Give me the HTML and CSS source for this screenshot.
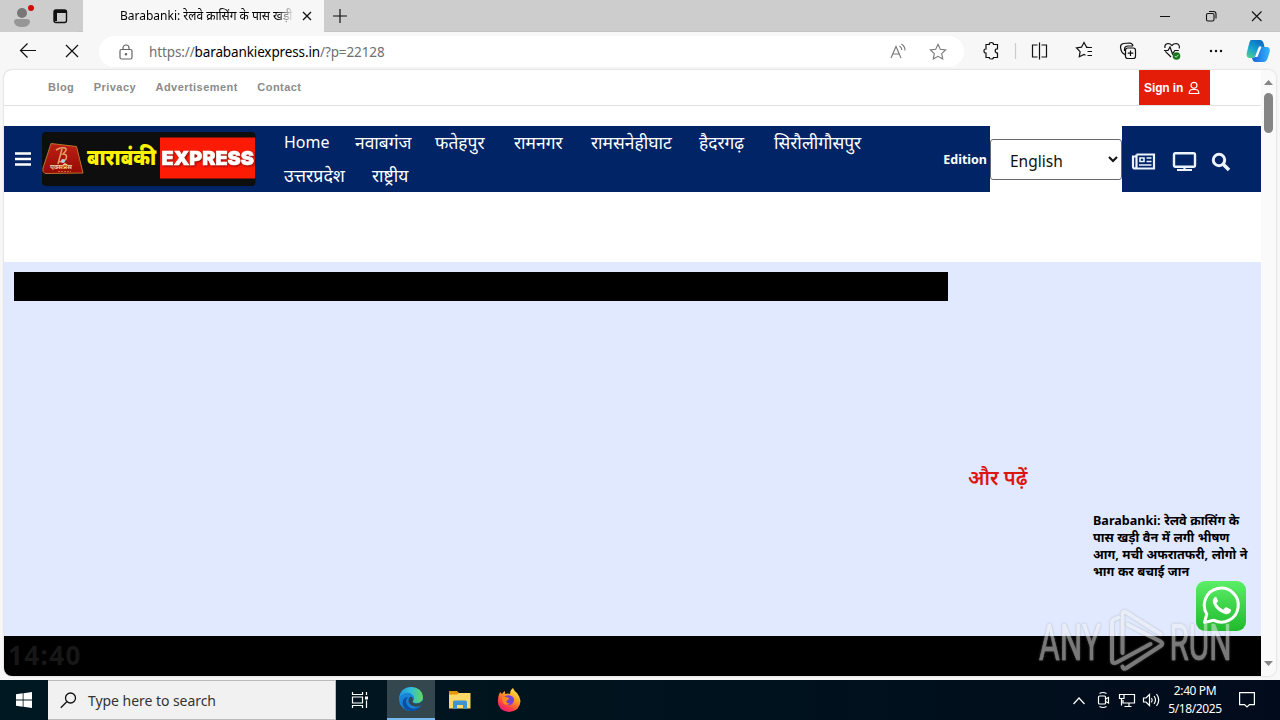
FILE: index.html
```html
<!DOCTYPE html>
<html lang="hi">
<head>
  <meta charset="utf-8">
  <meta name="viewport" content="width=device-width, initial-scale=1">
  <title>Barabanki Express</title>
  <link rel="stylesheet" href="styles.css">
</head>
<body>
  <!-- Browser tabs -->
  <div class="tabbar">
    <svg class="profile" width="82" height="32" viewBox="0 0 82 32">
      <circle cx="22" cy="13" r="5" fill="#777"/>
      <path d="M14 22q0-3 3-3h10q3 0 3 3q-1 5-8 5t-8-5z" fill="#969696"/>
      <circle cx="31" cy="8" r="3" fill="#d40a0a"/>
      <rect x="54" y="10" width="12.500" height="12.500" rx="2" fill="none" stroke="#111" stroke-width="1.400"/>
      <path d="M54 10h12.500v3H54zM54 12h3v9h-3z" fill="#111"/>
    </svg>
    <div class="tab">
      <span class="tab-title">Barabanki: रेलवे क्रासिंग के पास खड़ी</span>
      <svg width="10" height="10" viewBox="0 0 10 10"><path d="M1 1l8 8M9 1L1 9" stroke="#111" stroke-width="1.300"/></svg>
    </div>
    <svg class="new-tab" width="14" height="14" viewBox="0 0 14 14"><path d="M7 0v14M0 7h14" stroke="#111" stroke-width="1.200"/></svg>
    <svg class="window-buttons" width="110" height="32" viewBox="0 0 110 32" fill="none" stroke="#111" stroke-width="1.100">
      <path d="M4 16.500h10M96 11.500l9.500 9.500M105.500 11.500L96 21"/>
      <rect x="50.500" y="13.500" width="7.500" height="7.500" rx="1.500"/>
      <path d="M53 11.500h4.500q2.500 0 2.500 2.500v4.500"/>
    </svg>
  </div>

  <!-- Address bar -->
  <div class="toolbar">
    <svg class="nav-buttons" width="99" height="36" viewBox="0 0 99 36" fill="none" stroke="#111" stroke-width="1.200">
      <path d="M36 18.500H20.500M27.500 11.500l-7 7l7 7M66 13l12 12M78 13L66 25"/>
    </svg>
    <div class="address">
      <svg width="14" height="16" viewBox="0 0 14 16" fill="none" stroke="#666" stroke-width="1.200">
        <rect x="1" y="5.500" width="12" height="9.500" rx="1.500"/><path d="M4 5.500V4a3 3 0 0 1 6 0v1.500"/><circle cx="7" cy="10.200" r=".7" fill="#666"/>
      </svg>
      <span class="url">https://<b>barabankiexpress.in</b>/?p=22128</span>
      <svg class="address-tools" width="62" height="20" viewBox="0 0 62 20" fill="none" stroke="#777" stroke-width="1.100">
        <path d="M2 16L7 4.500L12 16M3.700 12h6.600M10.500 4q2.300 1.500 2.300 4M12.500 2q3.700 2.500 3.500 6.500"/>
        <path d="M49 2.300l2.300 4.900l5.300.7l-3.900 3.700l1 5.300l-4.700-2.600l-4.700 2.600l1-5.300l-3.900-3.700l5.300-.7z"/>
      </svg>
    </div>
    <svg class="tools" width="316" height="36" viewBox="964 32 316 36" fill="none" stroke="#111" stroke-width="1.200">
      <path d="M986 44.500h3.300q-.3-2 2-2t2.200 2h4v4.300q-2.300-.2-2.300 2t2.300 2.200v4.500h-4q0 1.500-2.200 1.500t-2-1.500H986v-4.300q-2 0-2-2.200t2-2z"/>
      <path d="M1015.500 43v16" stroke="#ccc"/>
      <path d="M1037.500 45h-5v12h5M1041.500 45h5v12h-5M1039.500 42.500v17"/>
      <path d="M1089 47.500l-2.500-.5l-2.500-4.500l-2.500 4.700l-5 .8l3.600 3.600l-.8 5.200l4.700-2.300l1.500.8M1086 47.500h6M1087.500 51.500h4.500M1087.500 55.500h4.500"/>
      <path d="M1125.500 55.500l-1.500-2M1124 54q-3-1.500-3.500-7q0-3 3-3.500l6-.5q3 0 3.500 3"/>
      <rect x="1125.500" y="48" width="10" height="10.500" rx="2.200"/><path d="M1130.500 50.500v5.500M1127.700 53.200h5.600M1124.500 51v-1.500q0-3.500 3.500-3.500h5"/>
      <path d="M1171 57l-5.700-5.600M1165 48q-.8-4 3-4.500q2.400 0 3.900 2q1.700-2 4.200-2q3.900.5 3.200 5M1164 50.500h4l2-3.500l2.500 7l2.300-3.500h4"/>
      <circle cx="1176.500" cy="56" r="3.800" fill="#147a18" stroke="none"/><path d="M1174.800 56l1.300 1.300l2.300-2.400" stroke="#fff" stroke-width=".8"/>
      <g fill="#111" stroke="none"><circle cx="1211" cy="51" r="1.200"/><circle cx="1216" cy="51" r="1.200"/><circle cx="1221" cy="51" r="1.200"/></g>
      <g stroke="none">
        <path d="M1251 40h9q2.500 0 3.500 3l1 4h-4q-2 0-2.700 2.500l-2 6.500q-.8 2-2.800 2h-4q-3.500-1-2-6l2-8q1-4 2-4z" fill="url(#pilotA)"/>
        <path d="M1264.500 47h2.500q4 .5 2.500 5.500l-2 6q-1.200 3.500-4 3.500h-8q-2.500 0-3.500-4h1q2 0 2.800-2l2-6.500q.7-2.500 2.700-2.500z" fill="url(#pilotB)"/>
        <path d="M1259 46.500h2.500l-4 10.500h-2.500z" fill="#fff"/>
      </g>
      <defs>
        <linearGradient id="pilotA" x1="0" y1="1" x2=".6" y2="0"><stop offset="0" stop-color="#56d487"/><stop offset=".5" stop-color="#19a5cf"/><stop offset="1" stop-color="#0b6fc7"/></linearGradient>
        <linearGradient id="pilotB" x1="0" y1="0" x2="1" y2="0"><stop offset="0" stop-color="#1860dc"/><stop offset="1" stop-color="#32b7fb"/></linearGradient>
      </defs>
    </svg>
  </div>

  <!-- Web page -->
  <div class="viewport">
    <div class="page">
      <div class="topbar">
        <div class="top-links">
          <span>Blog</span>
          <span>Privacy</span>
          <span>Advertisement</span>
          <span>Contact</span>
        </div>
        <div class="signin">Sign in
          <svg width="12" height="14" viewBox="0 0 12 14" fill="none" stroke="#fff" stroke-width="1.200"><circle cx="6" cy="4.300" r="3"/><path d="M1.200 12.500q0-4 3.300-4h3q3.300 0 3.300 4z"/></svg>
        </div>
      </div>

      <div class="header">
        <svg class="burger" width="16" height="14" viewBox="0 0 16 14"><path d="M0 1.500h16M0 7h16M0 12.500h16" stroke="#fff" stroke-width="2.400"/></svg>
        <svg class="logo" width="214" height="55" viewBox="0 0 214 55">
          <defs>
            <linearGradient id="badge" x1="0" y1="0" x2="0" y2="1"><stop offset="0" stop-color="#bd2015"/><stop offset="1" stop-color="#960a03"/></linearGradient>
          </defs>
          <rect width="213.500" height="54" rx="4" fill="#0e0e0e"/>
          <path d="M9 11.500l25.500 3L41 41l-38 .5Q0 40 1 36z" fill="url(#badge)" stroke="#b8752f" stroke-width="1"/>
          <path d="M14 18q5-3 9-2q3 1.500-2 6q5 0 3 5q-3 4-8 2M20 17l-4 15" fill="none" stroke="#e2a267" stroke-width="1.500"/>
          <circle cx="21" cy="29" r="2" fill="#a9d5ee"/>
          <text class="badge-text" x="8" y="37" textLength="22" lengthAdjust="spacingAndGlyphs">एक्सप्रेस</text>
          <path d="M16 39.500h13" stroke="#c9632a" stroke-dasharray="2 1"/>
          <text class="logo-hindi" x="45" y="33" textLength="69" lengthAdjust="spacingAndGlyphs">बाराबंकी</text>
          <rect x="118" y="5.500" width="95" height="41" fill="#fe1b05"/>
          <text class="logo-english" x="119.500" y="33" textLength="92.500" lengthAdjust="spacingAndGlyphs">EXPRESS</text>
        </svg>
        <div class="menu">
          <div class="menu-row">
            <span>Home</span>
            <span>नवाबगंज</span>
            <span>फतेहपुर</span>
            <span>रामनगर</span>
            <span>रामसनेहीघाट</span>
            <span>हैदरगढ़</span>
            <span>सिरौलीगौसपुर</span>
          </div>
          <div class="menu-row">
            <span class="wide">उत्तरप्रदेश</span>
            <span>राष्ट्रीय</span>
          </div>
        </div>
        <span class="edition">Edition</span>
        <div class="select-wrap">
          <div class="select">
            <span>English</span>
            <svg width="10" height="7" viewBox="0 0 10 7"><path d="M1 1l4 4l4-4" fill="none" stroke="#111" stroke-width="2"/></svg>
          </div>
        </div>
        <svg class="header-icons" width="139" height="66" viewBox="1122 126 139 66" fill="none" stroke="#eef4ff" stroke-width="2.200">
          <path d="M1136.500 154.500h17.500v14h-19q-2 0-2-2v-10h3M1136.500 154.500v12q0 2-1.500 2"/>
          <path d="M1140 158h4v3.500h-4zM1146.500 158h5M1146.500 161.500h5M1139 165h12.500" stroke-width="1.600"/>
          <rect x="1174" y="153.300" width="21" height="13.500" rx="1.500" stroke-width="2.400"/><path d="M1184.500 167v3M1177 170h15"/>
          <circle cx="1219" cy="160" r="5.700" stroke-width="3"/><path d="M1223.500 164.500l5.500 5.500" stroke-width="3.600"/>
        </svg>
      </div>

      <div class="content">
        <div class="ticker"></div>
        <div class="sidebar">
          <h2>और पढ़ें</h2>
          <p>Barabanki: रेलवे क्रासिंग के<br>पास खड़ी वैन में लगी भीषण<br>आग, मची अफरातफरी, लोगो ने<br>भाग कर बचाई जान</p>
        </div>
      </div>
      <div class="footer">14:40</div>
    </div>
    <div class="scrollbar">
      <svg width="9" height="5" viewBox="0 0 9 5"><path d="M0 5L4.500 0L9 5z" fill="#858585"/></svg>
      <div class="thumb"></div>
      <svg class="down" width="9" height="5" viewBox="0 0 9 5"><path d="M0 0h9L4.500 5z" fill="#858585"/></svg>
    </div>
  </div>

  <!-- Floating chat button -->
  <svg class="whatsapp" width="50" height="50" viewBox="0 0 50 50">
    <defs><linearGradient id="wa" x1="0" y1="0" x2="0" y2="1"><stop offset="0" stop-color="#5bee67"/><stop offset="1" stop-color="#20ba2c"/></linearGradient></defs>
    <rect width="50" height="50" rx="9" fill="url(#wa)"/>
    <path d="M8.500 41.500l2.300-8.500A17 17 0 1 1 17.500 39.200z" fill="none" stroke="#fff" stroke-width="3" stroke-linejoin="round"/>
    <path d="M19 16q-3 2-2 6q3 8 12 11q4 1 6-3q.5-1.500-1-2l-3.500-1.700q-1-.3-1.700.6l-1.500 1.800q-4.500-2-7-6.300q2-2 1.600-3l-1.600-3.300q-.4-.7-1.300-.1z" fill="#fff"/>
  </svg>

  <svg class="watermark" width="200" height="66" viewBox="1036 608 200 66">
    <g class="mark">
      <text x="1039" y="659.500" textLength="62" lengthAdjust="spacingAndGlyphs">ANY</text>
      <text x="1169.500" y="659.500" textLength="62" lengthAdjust="spacingAndGlyphs">RUN</text>
      <path d="M1118.500 617.500l-4 1.500q-2.500 1-2.500 4v37q0 4.500 4.500 2.500l34-18.500"/>
      <path d="M1122.500 653v-39q0-3.500 4-1.500l34 21.500M1127.500 624.500l33 17q3.500 2 0 4.500l-34 22q-3.500 2-4-1.500"/>
    </g>
  </svg>

  <!-- Windows taskbar -->
  <div class="taskbar">
    <div class="start">
      <svg width="16" height="16" viewBox="0 0 16 16" fill="#fff"><path d="M0 2.300L6.700 1.300V7.600H0zM7.500 1.200L16 0v7.600H7.500zM0 8.400h6.700v6.400L0 13.800zM7.500 8.400H16V16l-8.500-1.200z"/></svg>
    </div>
    <div class="search">
      <svg width="17" height="17" viewBox="0 0 17 17" fill="none" stroke="#111" stroke-width="1.300"><circle cx="10.500" cy="6" r="5"/><path d="M7 9.500L.8 15.800"/></svg>
      <span>Type here to search</span>
    </div>
    <div class="app task-view">
      <svg width="18" height="16" viewBox="0 0 18 16" fill="none" stroke="#fff" stroke-width="1.200"><path d="M1.500 0v2.500h10V0M1.500 16v-2.500h10V16M1.500 5h10v6h-10zM15.500 0v3M15.500 8.500V16"/><path d="M14 4.500h3v3h-3z" fill="#fff" stroke="none"/></svg>
    </div>
    <div class="app active">
      <svg width="24" height="24" viewBox="0 0 24 24">
        <defs>
          <linearGradient id="edgeTop" x1="0" y1="0" x2="1" y2="0"><stop offset="0" stop-color="#2193dc"/><stop offset=".5" stop-color="#31bfd4"/><stop offset="1" stop-color="#65d75a"/></linearGradient>
        </defs>
        <circle cx="12" cy="12" r="12" fill="#1784d8"/>
        <path d="M0 11Q2 0 12 0q11 .5 12 10q0 6-7 6q-3.500 0-3-2q2-2 .5-5Q11 4 5 6.500Q1.500 8 0 11z" fill="url(#edgeTop)"/>
        <path d="M9 10q-4 4 0 9q4 5 12.500.5Q18 24.500 12 24q-8-1-8.500-8Q4 10 9 10z" fill="#0c4fa5"/>
        <path d="M13.500 15q1.500 2 5 1.500q3-.5 5-3L24 16l-2.500 3q-7 2-11-2q-2-3-.5-6l2-1.500q3 1.500 1.500 5.500z" fill="#34474f"/>
      </svg>
    </div>
    <div class="app">
      <svg width="22" height="18" viewBox="0 0 22 18"><path d="M0 0h8l2 2h11v4H0z" fill="#df970d"/><path d="M0 3.500h8l2-1.500h11.500v15.500H0z" fill="#fdd868"/><path d="M4 18v-7q0-1.500 1.500-1.500h11Q18 9.500 18 11v7h-4v-4H8v4z" fill="#3f93d1"/></svg>
    </div>
    <div class="app">
      <svg width="24" height="24" viewBox="0 0 24 24">
        <defs><linearGradient id="fox" x1=".8" y1="0" x2=".2" y2="1"><stop offset="0" stop-color="#fff44f"/><stop offset=".4" stop-color="#ff9823"/><stop offset=".75" stop-color="#ff3b47"/><stop offset="1" stop-color="#e31587"/></linearGradient></defs>
        <path d="M3 4q1 1 2 2q1-2 3-3v3q3-1 5 0q0-4 3-6q1 3 4 5q3 4 3.500 8Q23 23 12 24Q1 23 .8 13Q1 8 3 4z" fill="url(#fox)"/>
        <path d="M8 8q5-2 8 1q2 3 0 6q-3 3.500-7 1.500Q6 15 6 12q3 2 5-.5L7.500 9.500z" fill="#7742dc"/>
        <path d="M5 10q2-2 4-1l3 1q0 2-2.500 2.500Q9 16 13 15.500Q9 18.500 6 15z" fill="#ff8a18"/>
      </svg>
    </div>
    <svg class="tray" width="92" height="40" viewBox="1070 680 92 40" fill="none" stroke="#fff" stroke-width="1.200">
      <path d="M1073.500 704l5.500-6l5.500 6"/>
      <rect x="1098.500" y="696" width="7" height="8" rx="1"/><path d="M1105.500 699l3-1.500v5.500l-3-1.500M1099.500 693.500q3.500-2 7 0M1099.500 706.500q3.500 2 7 0"/>
      <path d="M1124 694.500h10.500v8.500H1123v-3M1129 703v3.500M1124.500 706.500h7M1119.500 694.500h4.500v4h-4.500zM1121.500 698.500v7"/>
      <path d="M1143.500 698h2.500l3.500-3.500v11l-3.500-3.500h-2.500zM1151.500 698q1.500 2 0 4.500M1154 696q3 4 0 8M1156.500 694q4.500 6 0 12"/>
    </svg>
    <div class="clock"><span>2:40 PM</span><span>5/18/2025</span></div>
    <svg class="notice" width="16" height="16" viewBox="0 0 16 16" fill="none" stroke="#fff" stroke-width="1.200"><path d="M.6.6h14.800v12H10.500L8 15l-2.500-2.400H.6z"/></svg>
  </div>
</body>
</html>
```
FILE: styles.css
```css
* {
  box-sizing: border-box;
}

body {
  width: 1280px;
  height: 720px;
  margin: 0;
  overflow: hidden;
  display: flex;
  flex-direction: column;
  position: relative;
  background: #f7f7f7;
  font-family: "Noto Sans", "Noto Sans Devanagari", sans-serif;
  color: #111;
}

svg {
  display: block;
  flex: none;
}

.tabbar {
  height: 32px;
  flex: none;
  display: flex;
  align-items: center;
  background: #cdcdcd;
  border-bottom: 1px solid #c4c4c4;
}

.profile {
  background: #cdcdcd;
  border-radius: 0 0 6px 0;
}

.tab {
  width: 241px;
  height: 32px;
  margin-left: 1px;
  padding: 0 12px 0 37px;
  display: flex;
  align-items: center;
  justify-content: space-between;
  background: #f7f7f7;
}

.tab-title {
  width: 174px;
  overflow: hidden;
  white-space: nowrap;
  font-size: 12px;
  line-height: 24px;
  color: #000;
  -webkit-mask-image: linear-gradient(to right, #000 90%, transparent);
  mask-image: linear-gradient(to right, #000 90%, transparent);
}

.new-tab {
  margin-left: 9px;
}

.window-buttons {
  margin-left: auto;
  margin-right: 14px;
}

.toolbar {
  height: 38px;
  flex: none;
  display: flex;
}

.address {
  width: 865px;
  height: 31px;
  margin-top: 4px;
  padding: 0 13px 0 20px;
  display: flex;
  align-items: center;
  background: #fff;
  border-radius: 16px;
}

.url {
  margin-left: 16px;
  font-size: 13.5px;
  letter-spacing: -0.12px;
  color: #707070;
}

.url b {
  font-weight: 400;
  color: #000;
}

.address-tools {
  margin-left: auto;
}

.viewport {
  height: 606px;
  margin: 0 4px;
  flex: none;
  display: flex;
  overflow: hidden;
  background: #fff;
  border-radius: 8px;
  box-shadow: 0 0 2px #bbb;
}

.page {
  width: 1257px;
  display: flex;
  flex-direction: column;
}

.topbar {
  height: 36px;
  flex: none;
  padding: 0 51px 0 44px;
  display: flex;
  justify-content: space-between;
  border-bottom: 1px solid #e2e2e2;
  font-family: "Liberation Sans", Arial, sans-serif;
  font-size: 12px;
  font-weight: bold;
}

.top-links {
  display: flex;
  align-items: center;
  gap: 19.5px;
  padding-bottom: 1px;
  color: #8b8b8b;
  font-size: 11px;
  letter-spacing: 0.45px;
}

.signin {
  width: 71px;
  height: 35px;
  padding-left: 5px;
  display: flex;
  align-items: center;
  gap: 5px;
  background: #e41d08;
  color: #fff;
  letter-spacing: -0.1px;
}

.header {
  height: 66px;
  flex: none;
  margin-top: 20px;
  display: flex;
  align-items: center;
  background: #002466;
  color: #fff;
}

.burger {
  margin-left: 11px;
}

.logo {
  margin-left: 11px;
}

.badge-text {
  fill: #f0cf99;
  font-size: 7px;
  font-weight: bold;
}

.logo-hindi {
  fill: #fff200;
  font-size: 22px;
  font-weight: 900;
}

.logo-english {
  fill: #fff;
  font-family: Inter, sans-serif;
  font-size: 19px;
  font-weight: 900;
  stroke: #fff;
  stroke-width: 0.6px;
  filter: drop-shadow(1px 1px 1px #8a0a04);
}

.menu {
  height: 66px;
  padding-left: 28px;
  font-size: 17.4px;
  line-height: 32.5px;
  white-space: nowrap;
}

.menu-row {
  display: grid;
  grid-template-columns: 71px 80px 79px 77px 108px 75px auto;
}

.menu-row span:first-child {
  font-size: 16px;
}

.menu-row .wide {
  width: 88px;
}

.menu-row span.wide:first-child {
  font-size: 17.8px;
}

.menu-row .wide + span {
  margin-left: 17px;
}

.edition {
  margin-left: auto;
  padding-right: 3px;
  font-size: 12.5px;
  font-weight: bold;
}

.select-wrap {
  width: 132px;
  height: 66px;
  flex: none;
  padding-top: 13px;
  background: #fff;
}

.select {
  height: 41px;
  padding: 0 3px 0 19px;
  display: flex;
  align-items: center;
  justify-content: space-between;
  border: 1px solid #686874;
  border-radius: 3px;
  color: #111;
  font-size: 15.5px;
}

.select span {
  padding-top: 2px;
}

.content {
  height: 374px;
  flex: none;
  margin-top: 70px;
  padding: 10px;
  display: flex;
  background: #e0e9ff;
}

.ticker {
  width: 934px;
  height: 29px;
  background: #000;
}

.sidebar {
  margin-left: 20px;
  padding-top: 190px;
}

.sidebar h2 {
  margin: 0;
  font-size: 20px;
  line-height: 32px;
  font-weight: 600;
  color: #dc160e;
}

.sidebar p {
  margin: 18px 0 0 125px;
  font-size: 12.6px;
  line-height: 17px;
  font-weight: bold;
  word-spacing: 0.3px;
  white-space: nowrap;
  color: #000;
}

.footer {
  height: 40px;
  flex: none;
  padding-left: 4px;
  background: #000;
  color: #171717;
  font-size: 26px;
  line-height: 38px;
  font-weight: bold;
  letter-spacing: 1.4px;
}

.scrollbar {
  width: 15px;
  padding: 10px 0 10px;
  display: flex;
  flex-direction: column;
  align-items: center;
  background: #fafafa;
}

.thumb {
  width: 9px;
  height: 40px;
  margin-top: 8px;
  border-radius: 5px;
  background: #858585;
}

.down {
  margin-top: auto;
}

.whatsapp {
  position: absolute;
  left: 1196px;
  top: 581px;
}

.watermark {
  position: absolute;
  left: 1036px;
  top: 608px;
}

.mark {
  opacity: 0.5;
  filter: drop-shadow(0 0 1px #888);
}

.mark text {
  fill: #f2f2f2;
  font-family: Roboto, sans-serif;
  font-size: 50px;
  font-weight: 400;
  stroke: #f2f2f2;
  stroke-width: 0.6px;
}

.mark path {
  fill: none;
  stroke: #f2f2f2;
  stroke-width: 4;
  stroke-linecap: round;
}

.taskbar {
  height: 40px;
  flex: none;
  margin-top: 4px;
  display: flex;
  align-items: center;
  background: linear-gradient(to right, #001821, #00121d 60%, #020b1c);
  color: #fff;
}

.start {
  width: 48px;
  display: flex;
  justify-content: center;
}

.search {
  width: 288px;
  height: 40px;
  padding-left: 12px;
  display: flex;
  align-items: center;
  gap: 11px;
  background: #f1f1f1;
  border: 1px solid #bbb;
  border-left: 0;
  color: #333;
  font-size: 14px;
  letter-spacing: -0.05px;
}

.app {
  width: 49px;
  height: 40px;
  display: flex;
  align-items: center;
  justify-content: center;
}

.task-view {
  width: 51px;
  padding-right: 3px;
}

.app.active {
  width: 48px;
  background: #34474f;
  border-bottom: 2px solid #76b9ed;
}

.tray {
  margin-left: auto;
}

.clock {
  width: 66px;
  display: flex;
  flex-direction: column;
  align-items: center;
  font-size: 12px;
  line-height: 18px;
  letter-spacing: -0.4px;
}

.notice {
  margin-left: 11px;
  margin-right: 25px;
}
```
